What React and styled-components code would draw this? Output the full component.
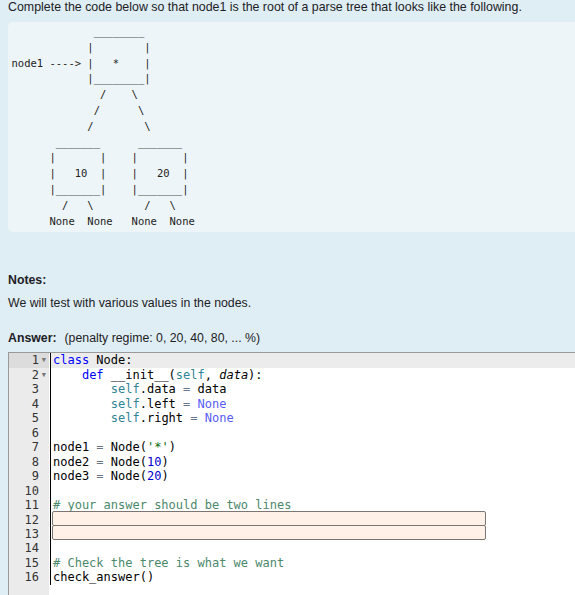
import React from "react";
import styled, { createGlobalStyle, css } from "styled-components";

const Global = createGlobalStyle`
  html, body { margin: 0; padding: 0; overflow: hidden; }
  body {
    background: #dfeef4;
    font-family: "Liberation Sans", Arial, sans-serif;
    color: #1d2125;
  }
`;

const Page = styled.div`
  width: 640px;
  padding-left: 8px;
  box-sizing: border-box;
`;

const Prompt = styled.p`
  margin: 0;
  font-size: 12.4px;
  line-height: 15px;
`;

const Diagram = styled.pre`
  margin: 7px 0 0 0;
  padding: 2px 0 3px 3.5px;
  background: #eef5f8;
  border-radius: 5px;
  font-family: "DejaVu Sans Mono", monospace;
  font-size: 10.5px;
  line-height: 15.8px;
  color: #222;
`;

const SectionTitle = styled.div`
  margin-top: ${(p) => p.$top}px;
  font-size: 12.3px;
  line-height: 15px;
  font-weight: bold;
  display: flex;
  gap: 8px;
`;

const Muted = styled.span`
  font-weight: normal;
`;

const Para = styled.p`
  margin: 8px 0 0 0;
  font-size: 12.3px;
  line-height: 15px;
`;

const LH = 14.47;

const Editor = styled.div`
  margin-top: 6px;
  display: flex;
  height: 260px;
  background: #fff;
  border-left: 1px solid #9a9a9a;
  border-top: 1px solid #9a9a9a;
  font-family: "DejaVu Sans Mono", monospace;
  font-size: 12px;
`;

const Gutter = styled.div`
  width: 40px;
  flex: none;
  background: #ebebeb;
`;

const GutterCell = styled.div`
  position: relative;
  height: ${LH}px;
  line-height: ${LH}px;
  text-align: right;
  padding-right: 10px;
  color: #333;
  ${(p) => p.$active && css`background: #dcdcdc;`}
`;

const Fold = styled.span`
  position: absolute;
  right: 3px;
  top: 0;
  font-size: 7px;
  color: #777;
`;

const Content = styled.div`
  flex: 1;
  padding-left: 1px;
`;

const Lines = styled.div`
  border-left: 1px solid #000;
`;

const Line = styled.div`
  position: relative;
  height: ${LH}px;
  line-height: ${LH}px;
  padding-left: 2px;
  white-space: pre;
  color: #000;
  ${(p) => p.$active && css`background: #ececec;`}
`;

const AnswerBox = styled.div`
  position: absolute;
  left: 1px;
  top: -2px;
  width: 434px;
  height: 15px;
  box-sizing: border-box;
  background: #fff0e8;
  border: 1px solid #7c7672;
  border-radius: 2px;
`;

const Kw = styled.span`color: #0000ff;`;
const Self = styled.span`color: #318495;`;
const Const = styled.span`color: #585cf6;`;
const Num = styled.span`color: #0000cd;`;
const Op = styled.span`color: #687687;`;
const Cm = styled.span`color: #4c886b;`;
const Str = styled.span`color: #036a07;`;
const Param = styled.span`font-style: italic;`;

const art = [
  "             ________",
  "            |        |",
  "node1 ----> |   *    |",
  "            |________|",
  "              /    \\",
  "             /      \\",
  "            /        \\",
  "       _______      _______",
  "      |       |    |       |",
  "      |   10  |    |   20  |",
  "      |_______|    |_______|",
  "        /   \\        /   \\",
  "      None  None   None  None",
].join("\n");

const code = [
  <><Kw>class</Kw> Node:</>,
  <>    <Kw>def</Kw> __init__(<Self>self</Self>, <Param>data</Param>):</>,
  <>        <Self>self</Self>.data <Op>=</Op> data</>,
  <>        <Self>self</Self>.left <Op>=</Op> <Const>None</Const></>,
  <>        <Self>self</Self>.right <Op>=</Op> <Const>None</Const></>,
  <></>,
  <>node1 <Op>=</Op> Node(<Str>'*'</Str>)</>,
  <>node2 <Op>=</Op> Node(<Num>10</Num>)</>,
  <>node3 <Op>=</Op> Node(<Num>20</Num>)</>,
  <></>,
  <><Cm># your answer should be two lines</Cm></>,
  "box",
  "box",
  <></>,
  <><Cm># Check the tree is what we want</Cm></>,
  <>check_answer()</>,
];

export default function App() {
  return (
    <>
      <Global />
      <Page>
        <Prompt>
          Complete the code below so that node1 is the root of a parse tree that looks like the following.
        </Prompt>
        <Diagram>{art}</Diagram>
        <SectionTitle $top={41}>Notes:</SectionTitle>
        <Para>We will test with various values in the nodes.</Para>
        <SectionTitle $top={20}>
          Answer: <Muted>(penalty regime: 0, 20, 40, 80, ... %)</Muted>
        </SectionTitle>
        <Editor>
          <Gutter>
            {code.map((_, i) => (
              <GutterCell key={i} $active={i === 0}>
                {i + 1}
                {(i === 0 || i === 1) && <Fold>▼</Fold>}
              </GutterCell>
            ))}
          </Gutter>
          <Content>
            <Lines>
              {code.map((c, i) => (
                <Line key={i} $active={i === 0}>
                  {c === "box" ? <AnswerBox /> : c}
                </Line>
              ))}
            </Lines>
          </Content>
        </Editor>
      </Page>
    </>
  );
}
